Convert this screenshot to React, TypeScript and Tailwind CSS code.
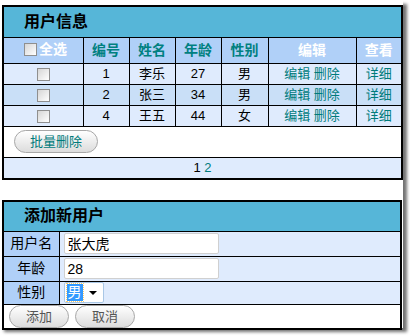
import React from 'react';

const users = [
  { id: 1, name: '李乐', age: 27, sex: '男' },
  { id: 2, name: '张三', age: 34, sex: '男' },
  { id: 4, name: '王五', age: 44, sex: '女' },
];

const Box: React.FC = () => (
  <span className="inline-block w-[13px] h-[13px] border border-[#8f8f8f] bg-gradient-to-br from-[#d6d6d6] to-[#ffffff] align-middle" />
);

const PillButton: React.FC<{ label: string; teal?: boolean; w: string }> = ({ label, teal, w }) => (
  <button
    className={`${w} h-[23px] rounded-full border border-[#a8a8a8] bg-gradient-to-b from-[#ffffff] to-[#dcdcdc] text-[13px] leading-none ${teal ? 'text-[#007b7b]' : 'text-[#555555]'}`}
  >
    {label}
  </button>
);

export default function App() {
  return (
    <div className="w-[410px] h-[336px] bg-white" style={{ fontFamily: '"Liberation Sans", "Noto Sans CJK SC", sans-serif' }}>
      <div className="w-[403px] h-[328px] bg-white pt-[5px] pl-[2px] shadow-[4px_4px_3px_rgba(0,0,0,0.55)]">
        <table className="w-[400px] border-collapse border-2 border-black text-[13px] table-fixed">
          <colgroup>
            <col className="w-[80px]" />
            <col className="w-[46px]" />
            <col className="w-[46px]" />
            <col className="w-[46px]" />
            <col className="w-[47px]" />
            <col className="w-[88px]" />
            <col className="w-[46px]" />
          </colgroup>
          <tbody>
            <tr className="h-[31px] bg-[#56b6d8]">
              <td colSpan={7} className="border border-black pl-[20px] text-[16px] font-bold text-black">用户信息</td>
            </tr>
            <tr className="h-[26px] bg-[#b0d0f8] font-bold text-[14px]">
              <td className="border border-black pl-[20px] text-white">
                <span className="inline-flex items-center gap-[2px]"><Box />全选</span>
              </td>
              <td className="border border-black text-center text-[#008080]">编号</td>
              <td className="border border-black text-center text-[#008080]">姓名</td>
              <td className="border border-black text-center text-[#008080]">年龄</td>
              <td className="border border-black text-center text-[#008080]">性别</td>
              <td className="border border-black text-center text-white">编辑</td>
              <td className="border border-black text-center text-white">查看</td>
            </tr>
            {users.map((u, i) => (
              <tr key={u.id} className={`h-[21px] ${i % 2 === 1 ? 'bg-[#c9dff7]' : 'bg-[#dfebfd]'}`}>
                <td className="border border-black text-center"><Box /></td>
                <td className="border border-black text-center">{u.id}</td>
                <td className="border border-black text-center">{u.name}</td>
                <td className="border border-black text-center">{u.age}</td>
                <td className="border border-black text-center">{u.sex}</td>
                <td className="border border-black text-center text-[#007b7b]">编辑 删除</td>
                <td className="border border-black text-center text-[#007b7b]">详细</td>
              </tr>
            ))}
            <tr className="h-[31px] bg-white">
              <td colSpan={7} className="border border-black pl-[10px]">
                <PillButton label="批量删除" teal w="w-[84px]" />
              </td>
            </tr>
            <tr className="h-[22px] bg-[#dfebfd]">
              <td colSpan={7} className="border border-black text-center">
                <span className="text-black">1</span> <span className="text-[#007b7b]">2</span>
              </td>
            </tr>
          </tbody>
        </table>

        <table className="mt-[20px] w-[400px] border-collapse border-2 border-black text-[14px] table-fixed">
          <colgroup>
            <col className="w-[56px]" />
            <col />
          </colgroup>
          <tbody>
            <tr className="h-[30px] bg-[#56b6d8]">
              <td colSpan={2} className="border border-black pl-[20px] text-[16px] font-bold text-black">添加新用户</td>
            </tr>
            <tr className="h-[25px]">
              <td className="border border-black bg-[#b0d0f8] text-center">用户名</td>
              <td className="border border-black bg-[#dfebfd] pl-[4px]">
                <div className="w-[155px] h-[21px] bg-white border border-[#d0d0d0] rounded-[2px] pl-[3px] text-[14px] leading-[20px]">张大虎</div>
              </td>
            </tr>
            <tr className="h-[25px]">
              <td className="border border-black bg-[#b0d0f8] text-center">年龄</td>
              <td className="border border-black bg-[#dfebfd] pl-[4px]">
                <div className="w-[155px] h-[21px] bg-white border border-[#d0d0d0] rounded-[2px] pl-[3px] text-[14px] leading-[20px]">28</div>
              </td>
            </tr>
            <tr className="h-[23px]">
              <td className="border border-black bg-[#b0d0f8] text-center">性别</td>
              <td className="border border-black bg-[#dfebfd] pl-[4px]">
                <div className="flex items-center w-[40px] h-[21px] bg-white border border-[#a9c7e6] rounded-[2px]">
                  <span className="ml-[2px] px-[1px] h-[17px] leading-[17px] bg-[#3399ff] text-white outline-1 outline-dotted outline-[#ffcc66]">男</span>
                  <span className="ml-[6px] w-0 h-0 border-l-[4px] border-r-[4px] border-t-[4px] border-l-transparent border-r-transparent border-t-black" />
                </div>
              </td>
            </tr>
            <tr className="h-[25px] bg-white">
              <td colSpan={2} className="border border-black pl-[5px]">
                <div className="flex gap-[6px]">
                  <PillButton label="添加" w="w-[60px]" />
                  <PillButton label="取消" w="w-[60px]" />
                </div>
              </td>
            </tr>
          </tbody>
        </table>
      </div>
    </div>
  );
}
